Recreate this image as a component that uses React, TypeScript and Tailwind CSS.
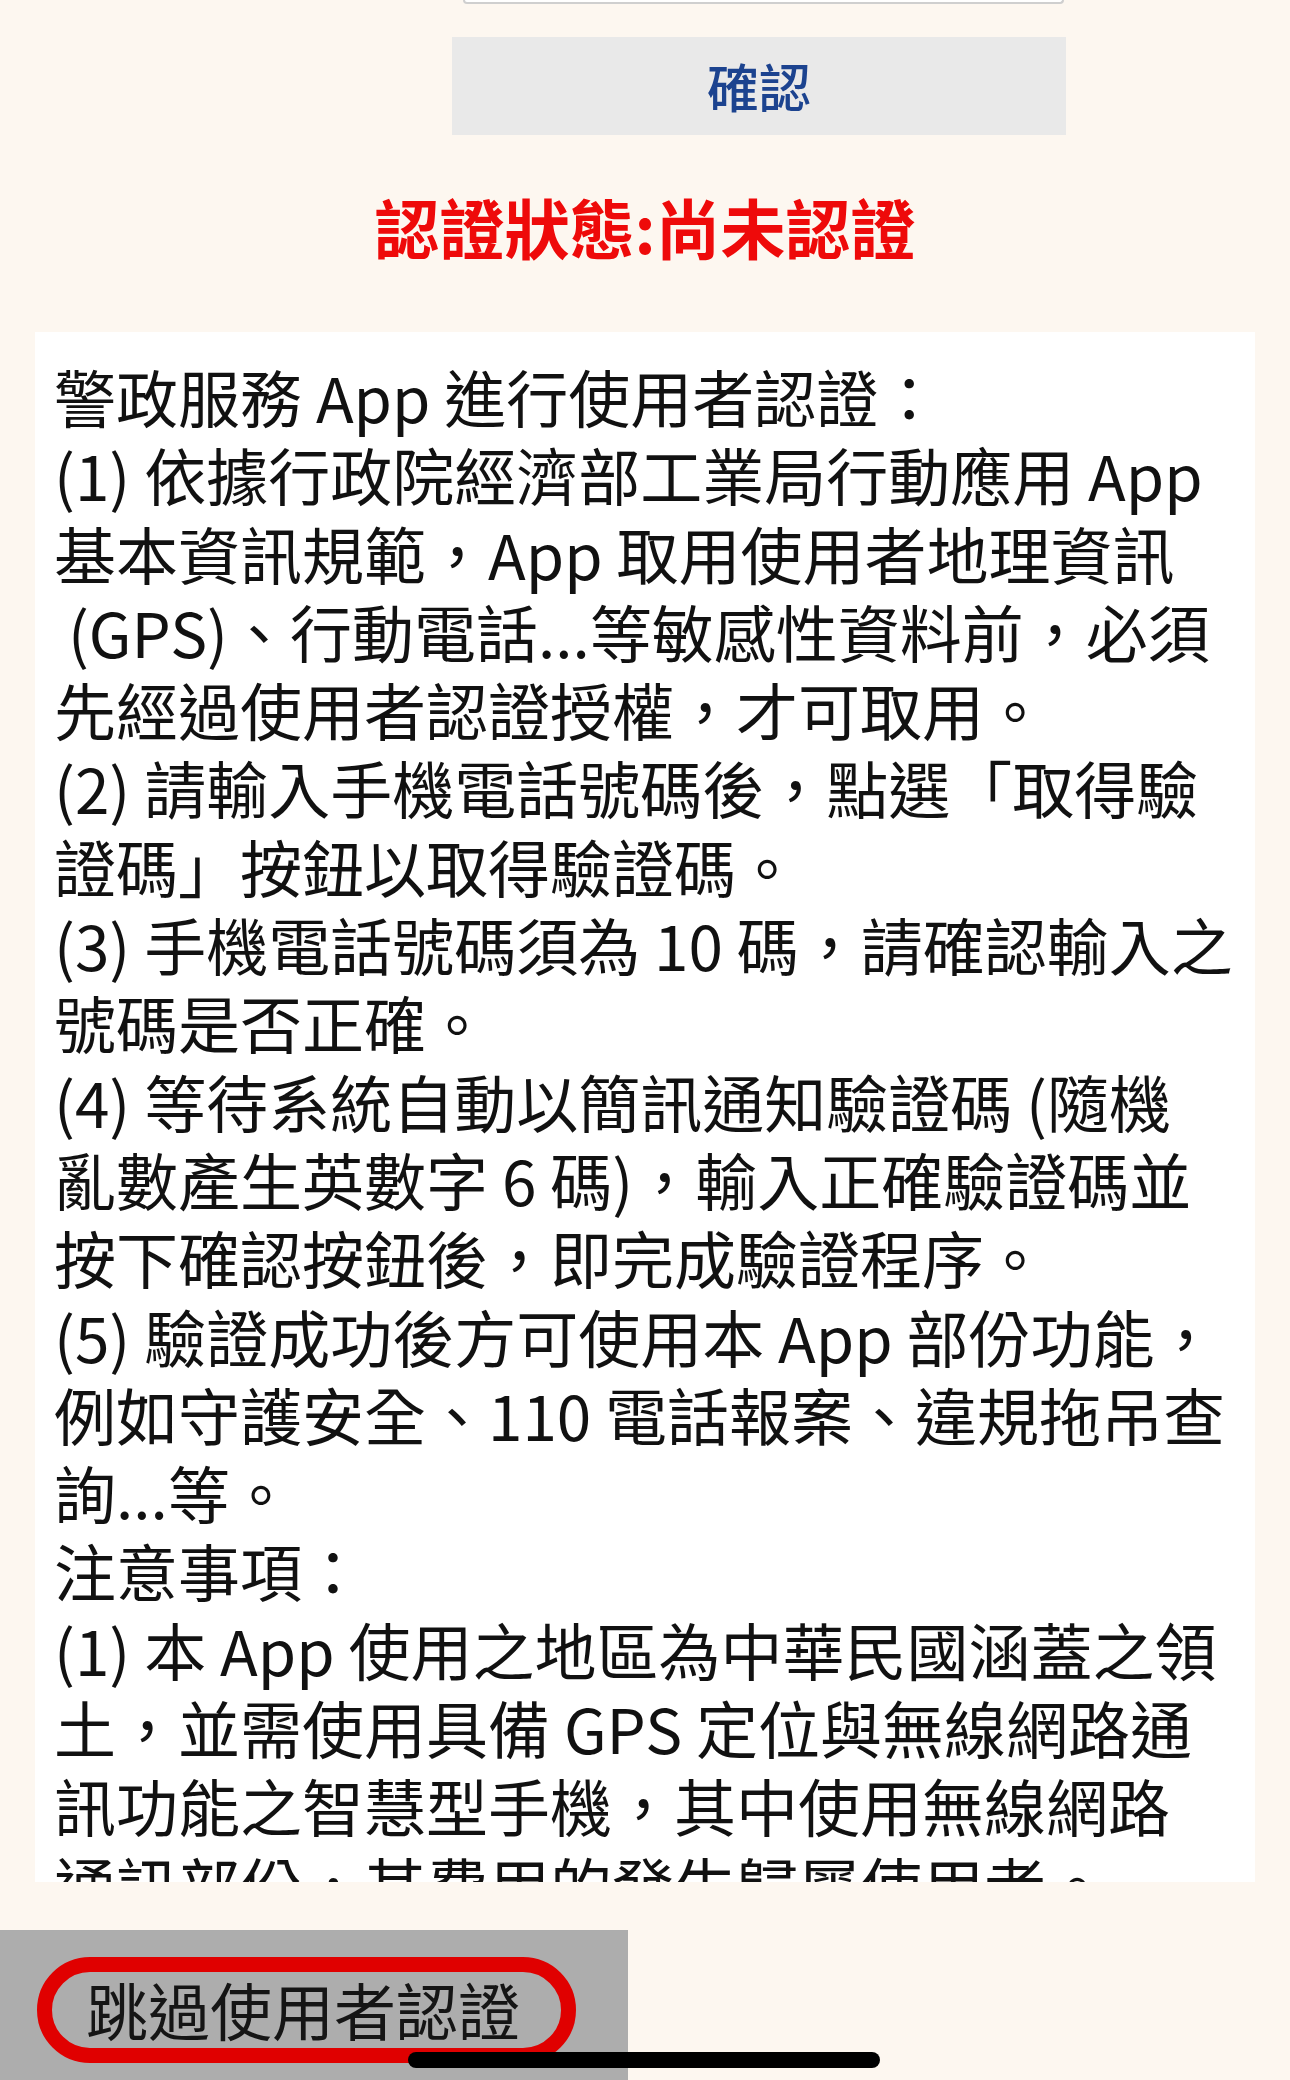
import React from "react";

const lines: string[] = [
  "警政服務 App 進行使用者認證：",
  "(1) 依據行政院經濟部工業局行動應用 App",
  "基本資訊規範，App 取用使用者地理資訊",
  " (GPS)、行動電話...等敏感性資料前，必須",
  "先經過使用者認證授權，才可取用。",
  "(2) 請輸入手機電話號碼後，點選「取得驗",
  "證碼」按鈕以取得驗證碼。",
  "(3) 手機電話號碼須為 10 碼，請確認輸入之",
  "號碼是否正確。",
  "(4) 等待系統自動以簡訊通知驗證碼 (隨機",
  "亂數產生英數字 6 碼)，輸入正確驗證碼並",
  "按下確認按鈕後，即完成驗證程序。",
  "(5) 驗證成功後方可使用本 App 部份功能，",
  "例如守護安全、110 電話報案、違規拖吊查",
  "詢...等。",
  "注意事項：",
  "(1) 本 App 使用之地區為中華民國涵蓋之領",
  "土，並需使用具備 GPS 定位與無線網路通",
  "訊功能之智慧型手機，其中使用無線網路",
  "通訊部份，其費用的發生歸屬使用者。",
];

export default function App() {
  return (
    <div
      className="relative w-[1290px] h-[2080px] overflow-hidden bg-[#fdf7f0]"
      style={{ fontFamily: '"Noto Sans CJK TC", "Noto Sans", sans-serif' }}
    >
      {/* bottom of input field */}
      <div className="ml-[463px] w-[601px] h-[4px] bg-white border-x-2 border-b-2 border-[#cfcfcf] rounded-b-[12px]" />

      {/* confirm button */}
      <div className="mt-[33px] ml-[452px] w-[614px] h-[98px] bg-[#e9e9e9] flex items-center justify-center">
        <span className="text-[52px] leading-none font-medium text-[#1c438f]">確認</span>
      </div>

      {/* status */}
      <div className="h-[197px] pb-[14px] flex items-center justify-center">
        <span className="text-[65px] leading-none font-bold text-[#ee0a0a]">認證狀態:尚未認證</span>
      </div>

      {/* card */}
      <div className="ml-[35px] w-[1220px] h-[1550px] bg-white overflow-hidden pt-[25px] pl-[19px]">
        {lines.map((l, i) => (
          <div key={i} className="whitespace-pre text-[62px] leading-[78.3px] text-[#111111]">
            {l}
          </div>
        ))}
      </div>

      {/* bottom bar */}
      <div className="mt-[48px] w-[628px] h-[150px] bg-[#adadad] pt-[48px] pl-[86px]">
        <div className="text-[62px] leading-[62px] text-[#151515] whitespace-nowrap">跳過使用者認證</div>
      </div>

      {/* red annotation oval */}
      <div className="absolute left-[37px] top-[1957px] w-[539px] h-[106px] rounded-full border-[15px] border-[#e00000]" />

      {/* home indicator */}
      <div className="absolute left-[408px] top-[2052px] w-[472px] h-[16px] rounded-full bg-black" />
    </div>
  );
}
